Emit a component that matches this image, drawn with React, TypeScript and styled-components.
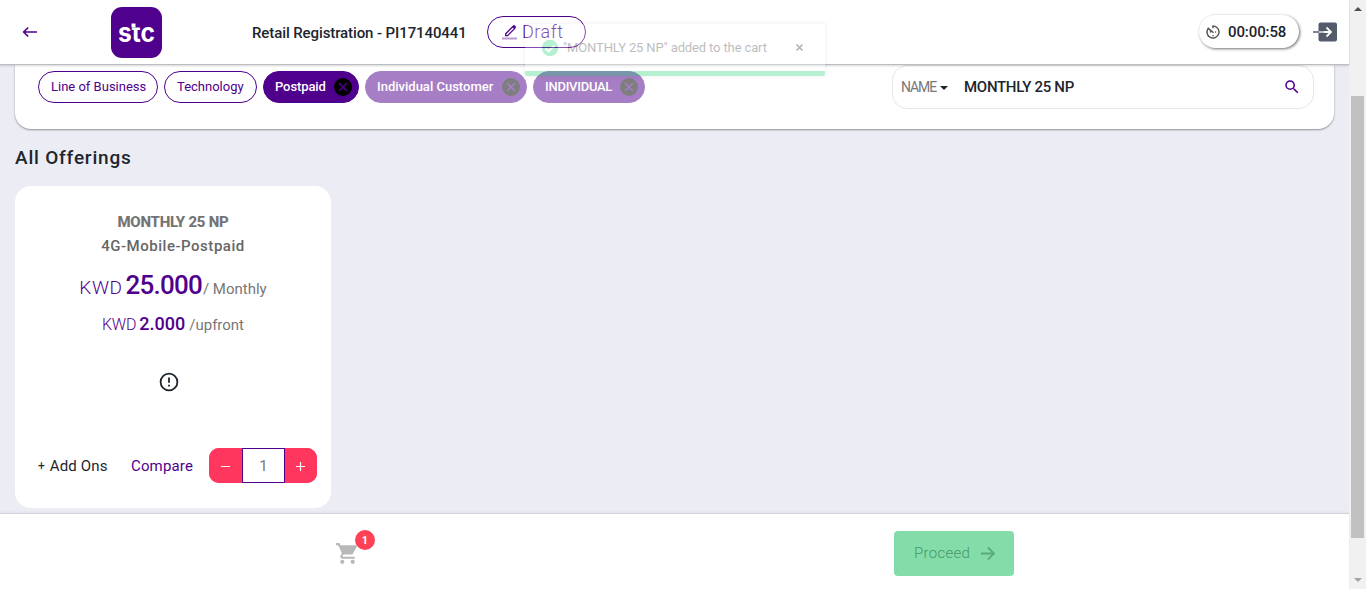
import React from "react";
import styled, { createGlobalStyle } from "styled-components";

const purple = "#4f008c";

const Global = createGlobalStyle`
  * { box-sizing: border-box; }
  body { margin: 0; overflow: hidden; font-family: Roboto, "Liberation Sans", sans-serif; color: #1d252d; }
  svg { display: block; flex: none; }
`;

const Screen = styled.div`display: flex; width: 1366px; height: 589px; background: #ececf5;`;
const Main = styled.main`position: relative; width: 1349px; display: flex; flex-direction: column;`;

const Text = styled.span<{ $size: number; $weight?: number; $color?: string; $spacing?: number; $gap?: number }>`
  font-size: ${(p) => p.$size}px;
  font-weight: ${(p) => p.$weight ?? 400};
  color: ${(p) => p.$color ?? "#1d252d"};
  letter-spacing: ${(p) => p.$spacing ?? 0}px;
  margin-right: ${(p) => p.$gap ?? 0}px;
  white-space: nowrap;
`;

const Header = styled.header`
  height: 65px; flex: none; display: flex; align-items: center; padding: 0 12px 1px 22px;
  background: #fff; border-bottom: 1px solid #bdbdc1; box-shadow: 0 1px 2px rgba(0, 0, 0, 0.16); z-index: 1;
`;
const Logo = styled.div`margin-left: 73px; width: 51px; height: 51px; margin-top: 1px;`;
const Title = styled.div`width: 235px; margin-left: 90px; padding-top: 2px; white-space: nowrap;`;
const DraftPill = styled.div`
  width: 99px; height: 32px; border: 1px solid ${purple}; border-radius: 16px;
  display: flex; align-items: center; padding-left: 14px; gap: 5px;
`;
const Timer = styled.div`
  width: 100px; height: 33px; margin-left: auto; border-radius: 17px; background: #fff;
  display: flex; align-items: center; padding-left: 5px; gap: 6px;
  box-shadow: 1px 1px 3px rgba(29, 37, 45, 0.65);
`;
const Exit = styled.div`margin-left: 14px;`;

const FilterPanel = styled.section`
  height: 64px; flex: none; margin: 0 15px; background: #fff; border-radius: 0 0 16px 16px;
  box-shadow: 0 1px 2px rgba(0, 0, 0, 0.4);
  display: flex; justify-content: space-between; align-items: flex-start; padding: 0 20px 0 23px;
`;
const Chips = styled.div`display: flex; gap: 6px; margin-top: 6px;`;
const Chip = styled.div<{ $width: number; $filled?: boolean; $faded?: boolean }>`
  width: ${(p) => p.$width}px; height: 32px; border-radius: 16px; border: 1px solid ${purple};
  background: ${(p) => (p.$filled ? purple : "#fff")};
  opacity: ${(p) => (p.$faded ? 0.5 : 1)};
  display: flex; align-items: center; justify-content: space-between;
  padding: ${(p) => (p.$filled ? "0 6px 0 11px" : "0 11px 0 12px")};
  ${Text} { margin-bottom: 2px; }
`;
const Search = styled.div`
  width: 422px; height: 44px; border: 1px solid #e6e6e9; border-radius: 15px;
  display: flex; align-items: center; padding: 0 12px 0 8px;
`;
const Caret = styled.i`border: 4px solid transparent; border-top-color: #1d252d; border-bottom: 0; margin: 1px 16px 0 3px;`;
const SearchIcon = styled.div`margin-left: auto;`;

const Heading = styled.h1`
  margin: 15px 0 0 15px; height: 28px; line-height: 28px; font-size: 19px; font-weight: 500; letter-spacing: 0.8px;
`;
const Card = styled.article`
  width: 316px; height: 322px; flex: none; margin: 14px 0 0 15px; padding-top: 25px;
  background: #fff; border-radius: 16px;
  display: flex; flex-direction: column; align-items: center;
`;
const Line = styled.div<{ $height: number; $top?: number }>`
  height: ${(p) => p.$height}px; line-height: ${(p) => p.$height}px; margin-top: ${(p) => p.$top ?? 0}px;
  display: flex; align-items: baseline;
`;
const Info = styled.div`margin: 34px 8px 0 0;`;
const Actions = styled.div`
  align-self: stretch; display: flex; align-items: center; height: 35px; margin-top: 54px; padding: 0 14px 0 23px;
`;
const AddOns = styled.div`width: 93px; display: flex; align-items: center; gap: 5px;`;
const Compare = styled.div`width: 78px;`;
const Stepper = styled.div`width: 108px; height: 35px; display: flex; border-radius: 10px; overflow: hidden; background: #ff375e;`;
const StepButton = styled.button<{ $width: number }>`
  width: ${(p) => p.$width}px; border: 0; padding: 0; background: #ff375e; display: grid; place-items: center;
`;
const Count = styled.div`width: 43px; border: 1px solid ${purple}; background: #fff; display: grid; place-items: center;`;

const Footer = styled.footer`
  height: 76px; margin-top: auto; flex: none; background: #fff; border-top: 1px solid #d3d3db; z-index: 1;
  box-shadow: 0 -1px 2px rgba(0, 0, 0, 0.05); display: flex; align-items: flex-start; padding: 16px 335px 0 335px; justify-content: space-between;
`;
const Cart = styled.div`position: relative; padding-top: 11px;`;
const Badge = styled.div`
  position: absolute; left: 20px; top: 0; width: 20px; height: 20px; border-radius: 50%; background: #ff4155;
  display: grid; place-items: center;
`;
const Proceed = styled.button`
  width: 120px; height: 45px; margin-top: 1px; border: 0; border-radius: 4px; background: #84dda8;
  display: flex; align-items: center; padding: 0 18px 2px 20px; justify-content: space-between; font-family: inherit;
`;

const Toast = styled.div`
  position: absolute; z-index: 2; left: 525px; top: 24px; width: 300px; height: 52px; opacity: 0.3;
  border-bottom: 5px solid #0fcf6a; border-radius: 2px; box-shadow: 0 0 4px rgba(0, 0, 0, 0.25);
  display: flex; align-items: center; padding: 0 21px 0 16px; background: #fff;
`;
const ToastText = styled.div`margin: 0 0 2px 4px; flex: 1;`;

const Scrollbar = styled.aside`
  width: 17px; background: #f1f1f1; display: flex; flex-direction: column; align-items: center; padding: 7px 0 7px;
`;
const Thumb = styled.div`width: 13px; height: 442px; margin: 85px 0 auto; background: #c1c1c1;`;
const ScrollArrow = styled.i<{ $down?: boolean }>`
  border: 4px solid transparent;
  ${(p) => (p.$down ? "border-top-color: #a3a3a3; border-bottom: 0;" : "border-bottom-color: #505050; border-top: 0;")}
`;

const Remove = () => (
  <svg width="18" height="18" viewBox="0 0 18 18">
    <circle cx="9" cy="9" r="9" fill="#000" />
    <path d="M5 5l8 8M13 5l-8 8" stroke={purple} strokeWidth="1.6" />
  </svg>
);

export default function App() {
  return (
    <Screen>
      <Global />
      <Main>
        <Header>
          <svg width="16" height="12" viewBox="0 0 16 12" fill="none" stroke={purple} strokeWidth="1.7">
            <path d="M15 6H2M6.2 1.5L1.7 6l4.5 4.5" />
          </svg>
          <Logo>
            <svg width="51" height="51" viewBox="0 0 51 51">
              <rect width="51" height="51" rx="11" fill={purple} />
              <text x="7" y="34.5" fill="#fff" fontFamily="Inter" fontWeight="700" fontSize="26" textLength="37" lengthAdjust="spacingAndGlyphs">stc</text>
              <rect x="20" y="13" width="10" height="7.500" fill={purple} />
              <rect x="20.500" y="16.500" width="4" height="4" fill="#fff" />
            </svg>
          </Logo>
          <Title><Text $size={15} $weight={500} $spacing={-0.1}>Retail Registration - PI17140441</Text></Title>
          <DraftPill>
            <svg width="15" height="16" viewBox="0 0 15 16" fill="none" stroke={purple}>
              <path d="M3.700 9.700L10.700 2.700l1.900 1.900-7 7H3.700z" strokeWidth="1.300" />
              <path d="M11.300 1.500l2.300 2.300" strokeWidth="2" />
              <path d="M0 14.500h15" strokeOpacity=".4" strokeWidth="2" />
            </svg>
            <Text $size={18} $weight={300} $color={purple} $spacing={0.5}>Draft</Text>
          </DraftPill>
          <Timer>
            <svg width="18" height="18" viewBox="0 0 24 24" fill="#555">
              <path d="M16.5 12c0-.6-.4-1-1-1s-1 .4-1 1 .4 1 1 1 1-.4 1-1zm-9 0c0 .6.4 1 1 1s1-.4 1-1-.4-1-1-1-1 .4-1 1zM12 16a1 1 0 100 2 1 1 0 000-2zM11 3v4h2V5.100a7 7 0 11-7.200 3.700l6.200 5 1.400-1.400L5.600 5.600A9 9 0 1012 3z" />
            </svg>
            <Text $size={15} $weight={500} $spacing={-0.1}>00:00:58</Text>
          </Timer>
          <Exit>
            <svg width="24" height="20" viewBox="0 0 24 20" fill="none">
              <rect x="5.500" y="0.500" width="18.500" height="19" rx="2" fill="#535c6b" />
              <path d="M0 10h6" stroke="#7e858f" strokeWidth="2" />
              <path d="M6 10h6" stroke="#bfc3c9" strokeWidth="2" />
              <path d="M11 10h7M13.500 5.500L18 10l-4.500 4.500" stroke="#fff" strokeWidth="1.800" />
            </svg>
          </Exit>
        </Header>

        <FilterPanel>
          <Chips>
            <Chip $width={120}><Text $size={13} $color={purple}>Line of Business</Text></Chip>
            <Chip $width={93}><Text $size={13} $color={purple}>Technology</Text></Chip>
            <Chip $width={96} $filled><Text $size={13} $weight={500} $color="#fff" $spacing={-0.1}>Postpaid</Text><Remove /></Chip>
            <Chip $width={162} $filled $faded><Text $size={13} $weight={500} $color="#fff">Individual Customer</Text><Remove /></Chip>
            <Chip $width={112} $filled $faded><Text $size={13} $weight={500} $color="#fff" $spacing={-0.25}>INDIVIDUAL</Text><Remove /></Chip>
          </Chips>
          <Search>
            <Text $size={14} $color="#777" $spacing={-1.1} $gap={1}>NAME</Text>
            <Caret />
            <Text $size={15} $weight={500} $spacing={-0.3}>MONTHLY 25 NP</Text>
            <SearchIcon>
              <svg width="18" height="18" viewBox="0 0 24 24" fill={purple}>
                <path d="M15.500 14h-.79l-.28-.27A6.500 6.500 0 0016 9.500 6.500 6.500 0 109.500 16c1.610 0 3.090-.59 4.230-1.570l.27.28v.79l5 4.990L20.490 19l-4.990-5zm-6 0C7.010 14 5 11.990 5 9.500S7.010 5 9.500 5 14 7.010 14 9.500 11.990 14 9.500 14z" />
              </svg>
            </SearchIcon>
          </Search>
        </FilterPanel>

        <Heading>All Offerings</Heading>
        <Card>
          <Line $height={23}><Text $size={15} $weight={800} $color="#747474" $spacing={-0.25}>MONTHLY 25 NP</Text></Line>
          <Line $height={24}><Text $size={15} $weight={500} $color="#666" $spacing={0.52}>4G-Mobile-Postpaid</Text></Line>
          <Line $height={36} $top={9}>
            <Text $size={19} $weight={300} $color={purple} $spacing={0.6} $gap={3}>KWD</Text>
            <Text $size={26} $weight={500} $color={purple} $spacing={-0.8} $gap={1}>25.000</Text>
            <Text $size={15} $color="#777">/ Monthly</Text>
          </Line>
          <Line $height={24} $top={9}>
            <Text $size={16} $weight={300} $color={purple} $spacing={-0.2} $gap={3}>KWD</Text>
            <Text $size={18} $weight={500} $color={purple} $gap={4}>2.000</Text>
            <Text $size={15} $color="#777">/upfront</Text>
          </Line>
          <Info>
            <svg width="24" height="24" viewBox="0 0 24 24" fill="none" stroke="#1d252d" strokeWidth="1.800">
              <circle cx="12" cy="12" r="8.400" /><path d="M12 7.500v5.300M12 14.800v1.800" />
            </svg>
          </Info>
          <Actions>
            <AddOns><Text $size={12}>+</Text><Text $size={15} $spacing={0.15}>Add Ons</Text></AddOns>
            <Compare><Text $size={15} $color={purple} $spacing={0.15}>Compare</Text></Compare>
            <Stepper>
              <StepButton $width={33}><svg width="10" height="10"><path d="M0 5.500h9" stroke="#fff" /></svg></StepButton>
              <Count><Text $size={15} $color="#777">1</Text></Count>
              <StepButton $width={32}><svg width="10" height="10"><path d="M0 5.500h9M4.500 1v9" stroke="#fff" strokeWidth="1.200" /></svg></StepButton>
            </Stepper>
          </Actions>
        </Card>

        <Footer>
          <Cart>
            <svg width="25" height="25" viewBox="0 0 24 24" fill="#b8b8b8">
              <path d="M7 18c-1.100 0-1.990.9-1.990 2S5.900 22 7 22s2-.9 2-2-.9-2-2-2zM1 2v2h2l3.600 7.590-1.350 2.450C4.520 15.370 5.480 17 7 17h12v-2H7.420a.25.25 0 01-.25-.25l.93-1.750h7.450c.75 0 1.410-.41 1.750-1.030l3.580-6.490A1 1 0 0020 4H5.210l-.94-2H1zm16 16c-1.100 0-1.990.9-1.990 2s.89 2 1.990 2 2-.9 2-2-.9-2-2-2z" />
            </svg>
            <Badge><Text $size={11} $weight={700} $color="#fff">1</Text></Badge>
          </Cart>
          <Proceed>
            <Text $size={15} $weight={300} $color="#45976a" $spacing={0.3}>Proceed</Text>
            <svg width="16" height="16" viewBox="0 0 16 16" fill="none" stroke="#5aaa7b" strokeWidth="1.800"><path d="M1 8.500h13M8 2.500l6 6-6 6" /></svg>
          </Proceed>
        </Footer>

        <Toast>
          <svg width="18" height="18" viewBox="0 0 18 18"><circle cx="9" cy="9" r="8.200" fill="#0fcf6a" /><path d="M4.500 9.500l3 3 6-6" fill="none" stroke="#fff" strokeWidth="1.800" /></svg>
          <ToastText><Text $size={13} $spacing={-0.13}>"MONTHLY 25 NP" added to the cart</Text></ToastText>
          <svg width="9" height="9" viewBox="0 0 9 9" stroke="#000" strokeWidth="1.600"><path d="M1.500 1.500l6 6M7.500 1.500l-6 6" /></svg>
        </Toast>
      </Main>
      <Scrollbar><ScrollArrow /><Thumb /><ScrollArrow $down /></Scrollbar>
    </Screen>
  );
}
